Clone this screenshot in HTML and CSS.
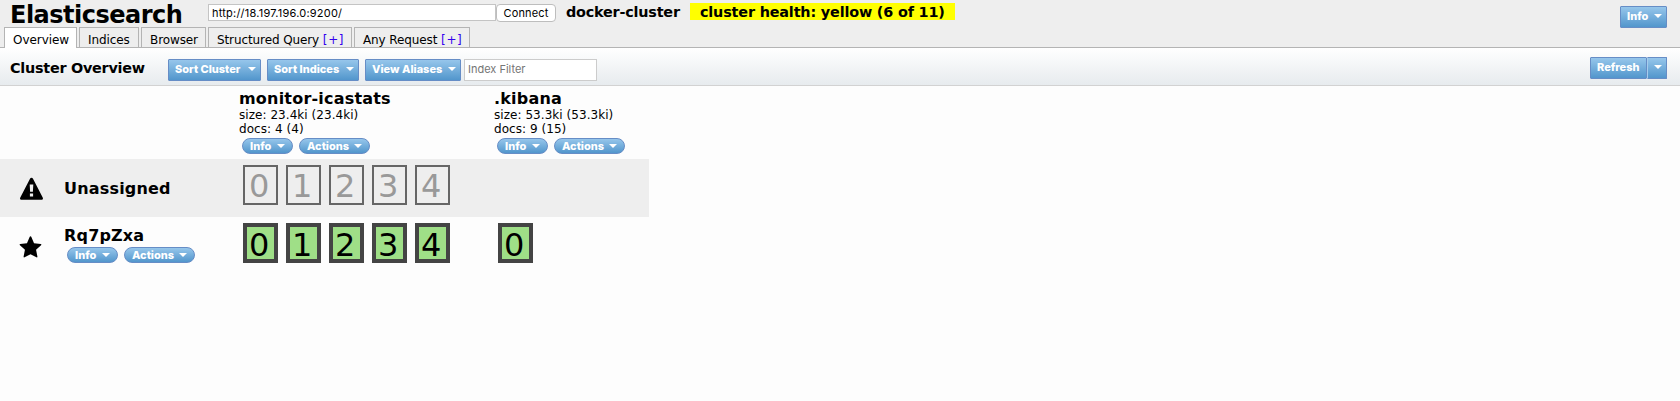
FILE: index.html
```html
<!DOCTYPE html>
<html lang="en">
<head>
<meta charset="utf-8">
<title>Elasticsearch</title>
<link rel="stylesheet" href="styles.css">
</head>
<body>
<header class="header">
  <div class="topbar">
    <h1 class="title">Elasticsearch</h1>
    <input class="url" type="text" value="http://18.197.196.0:9200/">
    <button class="connect">Connect</button>
    <span class="cluster-name">docker-cluster</span>
    <span class="health">cluster health: yellow (6 of 11)</span>
    <button class="btn btn-info">Info<i class="caret"></i></button>
  </div>
  <nav class="tabs">
    <div class="tab tab-overview active">Overview</div>
    <div class="tab tab-indices">Indices</div>
    <div class="tab tab-browser">Browser</div>
    <div class="tab tab-query">Structured Query <a class="add">[+]</a></div>
    <div class="tab tab-any">Any Request <a class="add">[+]</a></div>
  </nav>
</header>
<section class="toolbar">
  <h2 class="heading">Cluster Overview</h2>
  <button class="btn btn-cluster">Sort Cluster<i class="caret"></i></button>
  <button class="btn btn-indices">Sort Indices<i class="caret"></i></button>
  <button class="btn btn-aliases">View Aliases<i class="caret"></i></button>
  <input class="filter" type="text" placeholder="Index Filter">
  <div class="refresh">
    <button class="btn btn-refresh">Refresh</button>
    <button class="btn btn-more"><i class="caret"></i></button>
  </div>
</section>
<main class="grid">
  <div class="row row-head">
    <div class="node"></div>
    <div class="index">
      <h3 class="name name-icastats">monitor-icastats</h3>
      <div class="stat">size: 23.4ki (23.4ki)</div>
      <div class="stat">docs: 4 (4)</div>
      <div class="pills"><button class="pill pill-info">Info<i class="caret"></i></button><button class="pill pill-actions">Actions<i class="caret"></i></button></div>
    </div>
    <div class="index">
      <h3 class="name name-kibana">.kibana</h3>
      <div class="stat">size: 53.3ki (53.3ki)</div>
      <div class="stat">docs: 9 (15)</div>
      <div class="pills"><button class="pill pill-info">Info<i class="caret"></i></button><button class="pill pill-actions">Actions<i class="caret"></i></button></div>
    </div>
  </div>
  <div class="row row-unassigned">
    <div class="node">
      <svg class="icon" viewBox="0 0 24 24"><path fill-rule="evenodd" d="M12 .8q1 0 1.500 1L23.200 20.500q.6 1.100 0 1.800-.4.500-1.200.500H2q-.8 0-1.200-.500-.6-.7 0-1.800L10.500 1.800q.5-1 1.500-1zM10.200 7.500l.4 7.300h2.800l.4-7.300zM10.400 16.600v3h3.200v-3z"/></svg>
      <h3 class="node-name name-unassigned">Unassigned</h3>
    </div>
    <div class="shards">
      <div class="shard">0</div><div class="shard">1</div><div class="shard">2</div><div class="shard">3</div><div class="shard">4</div>
    </div>
  </div>
  <div class="row row-node">
    <div class="node">
      <svg class="icon star" viewBox="0 0 24 24"><path d="M12 1.200q.6 0 .9.800l2.800 6.500 7 .8q1.200.3.300 1.300l-5.200 4.900 1.400 7q.1 1.300-1 .8L12 20l-6.200 3.300q-1.100.5-1-.8l1.400-7L1 10.600q-.9-1 .3-1.300l7-.8L11.100 2q.3-.8.900-.8z"/></svg>
      <div class="node-info">
        <h3 class="node-name name-rq">Rq7pZxa</h3>
        <div class="pills"><button class="pill pill-info">Info<i class="caret"></i></button><button class="pill pill-actions">Actions<i class="caret"></i></button></div>
      </div>
    </div>
    <div class="shards">
      <div class="shard">0</div><div class="shard">1</div><div class="shard">2</div><div class="shard">3</div><div class="shard">4</div>
    </div>
    <div class="shards">
      <div class="shard">0</div>
    </div>
  </div>
</main>
</body>
</html>
```
FILE: styles.css
```css
* { box-sizing: border-box; }
body {
  margin: 0;
  height: 401px;
  overflow: hidden;
  background: #fdfdfd;
  color: #000;
  font: 12px Verdana, "DejaVu Sans", sans-serif;
  white-space: nowrap;
}
h1, h2, h3 { margin: 0; font-weight: bold; }
button, input { margin: 0; font-family: Inter, sans-serif; }
.header {
  height: 48px;
  background: #eee;
  border-bottom: 1px solid #b4b4b4;
}
.topbar { display: flex; align-items: flex-start; height: 27px; }
.title {
  width: 198px;
  margin-left: 10px;
  font-size: 24px;
  line-height: 31px;
  letter-spacing: -0.5px;
}
.url {
  width: 288px;
  height: 17px;
  margin-top: 4px;
  padding: 0 3px;
  border: 1px solid #c4c4c4;
  background: #fff;
  font-size: 11px;
  letter-spacing: 0.22px;
}
.connect {
  width: 60px;
  height: 18px;
  margin-top: 4px;
  padding: 0;
  border: 1px solid #bdbdbd;
  border-radius: 4px;
  background: #fff;
  font-size: 11px;
  line-height: 15px;
  letter-spacing: 0.15px;
}
.cluster-name {
  width: 134px;
  padding-left: 10px;
  font-size: 14.4px;
  font-weight: bold;
  line-height: 24px;
  letter-spacing: -0.21px;
}
.health {
  width: 265px;
  height: 17px;
  margin-top: 3px;
  padding-left: 10px;
  background: #ff0;
  font-size: 14.4px;
  font-weight: bold;
  line-height: 18px;
  letter-spacing: -0.17px;
}
.tabs { display: flex; gap: 2px; padding-left: 4px; height: 21px; }
.tab {
  height: 20px;
  padding-left: 8px;
  border: 1px solid #b4b4b4;
  border-bottom: 0;
  line-height: 24px;
  letter-spacing: -0.1px;
}
.tab.active { height: 21px; background: #fff; letter-spacing: -0.05px; }
.tab-overview { width: 73px; }
.tab-indices { width: 60px; }
.tab-browser { width: 65px; }
.tab-query { width: 144px; }
.tab-any { width: 116px; }
.add { color: #30e; letter-spacing: 0.6px; }
.toolbar {
  display: flex;
  align-items: flex-start;
  height: 38px;
  padding-top: 11px;
  border-bottom: 1px solid #d2d2d2;
  background: linear-gradient(#fff, #e7ebee);
}
.heading {
  width: 158px;
  margin-left: 10px;
  font-size: 14.4px;
  line-height: 18px;
  letter-spacing: -0.26px;
}
.btn {
  display: flex;
  align-items: center;
  justify-content: space-between;
  height: 22px;
  padding: 0 4px 2px 6px;
  border: 1px solid #668dc6;
  border-radius: 1px;
  background: linear-gradient(#96c6eb, #5296cc);
  color: #fff;
  font-size: 11px;
  font-weight: 800;
}
.caret {
  width: 0;
  height: 0;
  border: 4px solid transparent;
  border-top: 4px solid #fff;
  border-bottom: 0;
}
.btn-info { width: 47px; margin: 6px 13px 0 auto; }
.btn-cluster { width: 93px; margin-right: 6px; }
.btn-indices { width: 92px; margin-right: 6px; }
.btn-aliases { width: 96px; margin-right: 3px; }
.filter {
  width: 133px;
  height: 22px;
  padding: 0 3px 2px;
  border: 1px solid #ccc;
  background: #fff;
  font-size: 11px;
}
.filter::placeholder { color: #757575; }
.refresh { display: flex; margin: -2px 13px 0 auto; }
.btn-refresh { width: 57px; }
.btn-more { width: 20px; border-left-color: #a7cdec; }
.grid { width: 649px; }
.row { display: flex; }
.row-head { height: 73px; }
.row-unassigned { height: 58px; background: #eee; }
.row-node { height: 58px; }
.node { flex: none; display: flex; width: 239px; padding-left: 19px; }
.index { flex: none; width: 255px; }
.name { font-size: 16px; line-height: 21px; padding-top: 2px; height: 21px; letter-spacing: 0.2px; }
.stat { height: 14px; line-height: 16px; letter-spacing: 0.05px; }
.pills { display: flex; gap: 6px; padding: 3px 0 0 3px; }
.pill {
  display: flex;
  align-items: center;
  justify-content: space-between;
  height: 16px;
  padding: 0 7px;
  border: 1px solid #668dc6;
  border-radius: 8px;
  background: linear-gradient(#96c6eb, #5296cc);
  color: #fff;
  font-size: 11px;
  font-weight: 800;
}
.pill-info { width: 51px; }
.pill-actions { width: 71px; }
.icon { width: 25px; height: 24px; margin: 18px 20px 0 0; }
.star { width: 23px; height: 23px; margin: 18px 22px 0 0; }
.node-name { font-size: 16px; letter-spacing: 0.18px; }
.name-unassigned { line-height: 59px; }
.name-rq { height: 27px; line-height: 37px; }
.node-info .pills { padding: 3px 0 0 3px; }
.shards { flex: none; display: flex; gap: 8px; width: 255px; padding: 6px 0 0 4px; }
.shard {
  width: 35px;
  height: 40px;
  padding-left: 4px;
  border: 2px solid #666;
  color: #999;
  font-size: 32px;
  line-height: 38px;
}
.row-node .shard {
  padding-left: 2px;
  border: 4px solid #444;
  background: #9fdf87;
  color: #000;
  line-height: 36px;
}
```
